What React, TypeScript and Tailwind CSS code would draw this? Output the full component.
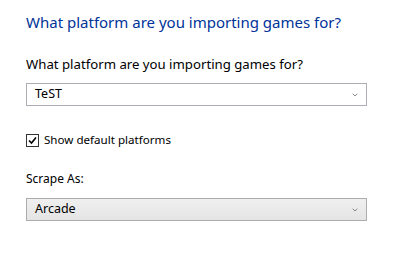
import { ChevronDown } from 'lucide-react'

function Combo({ value, shaded }: { value: string; shaded?: boolean }) {
  return (
    <div
      className={`flex h-[23px] w-[341px] items-center justify-between border pl-[8px] pr-[7px] ${
        shaded ? 'border-[#acacac] bg-gradient-to-b from-[#efefef] to-[#e5e5e5]' : 'border-[#abadb3] bg-white'
      }`}
    >
      <span className="text-[12.5px] text-black">{value}</span>
      <ChevronDown className="h-[8px] w-[8px] text-[#606060]" strokeWidth={2.2} />
    </div>
  )
}

export default function App() {
  return (
    <div
      className="h-[253px] w-[408px] bg-white pl-[26px] pt-[12px]"
      style={{ fontFamily: '"Noto Sans", sans-serif' }}
    >
      <h1 className="text-[15px] leading-[20px] text-[#003399]">What platform are you importing games for?</h1>
      <p className="mt-[24px] text-[13.2px] leading-[16px] text-black">What platform are you importing games for?</p>
      <div className="mt-[11px]">
        <Combo value="TeST" />
      </div>
      <label className="mt-[26px] flex items-center gap-[5px] text-[11.6px] leading-[16px] text-black">
        <span className="flex h-[13px] w-[13px] items-center justify-center border border-[#333] bg-white">
          <svg viewBox="0 0 11 11" className="h-[11px] w-[11px]">
            <path d="M2 5.5 L4.5 8 L9 2.5" fill="none" stroke="#000" strokeWidth="1.6" />
          </svg>
        </span>
        Show default platforms
      </label>
      <p className="mt-[23px] text-[12px] leading-[16px] text-black">Scrape As:</p>
      <div className="mt-[11px]">
        <Combo value="Arcade" shaded />
      </div>
    </div>
  )
}
